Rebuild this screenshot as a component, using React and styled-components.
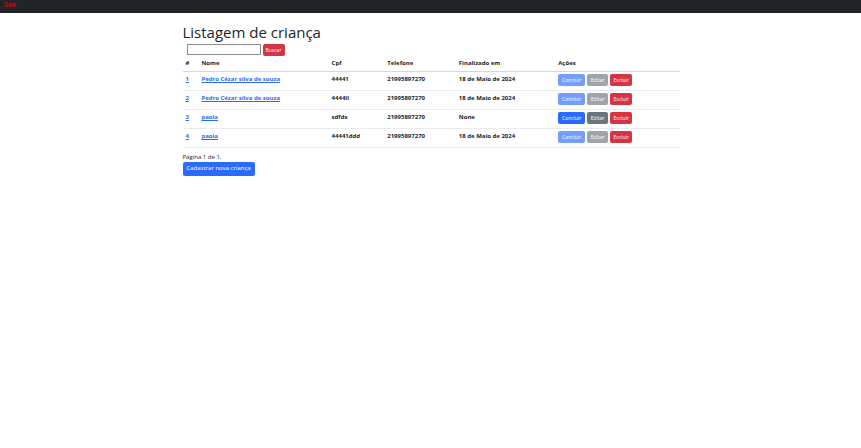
import React from "react";
import styled, { createGlobalStyle } from "styled-components";

const GlobalStyle = createGlobalStyle`
  *, *::before, *::after { box-sizing: border-box; }
  body {
    margin: 0;
    background: #fff;
    color: #212529;
    font-family: "Segoe UI", "Open Sans", "Noto Sans", sans-serif;
    font-size: 6px;
    line-height: 9px;
  }
`;

const TopBar = styled.nav`
  display: flex;
  height: 13px;
  padding: 0 4px;
  background: #212529;
`;

const LogoutLink = styled.a`
  color: #ff0000;
  font-size: 7px;
  line-height: 9px;
  text-decoration: none;
`;

const Container = styled.main`
  max-width: 498px;
  margin: 0 auto;
  padding: 9px 0 0 1px;
`;

const Title = styled.h1`
  margin: 0 0 2px;
  font-size: 15px;
  line-height: 20px;
  font-weight: 500;
`;

const SearchForm = styled.form`
  display: flex;
  align-items: flex-start;
  gap: 2px;
  padding-left: 4px;
`;

const SearchInput = styled.input`
  width: 74px;
  height: 11px;
  padding: 0 2px;
  border: 1px solid #8c8c8c;
  border-radius: 0;
  background: #fff;
  font: inherit;
`;

const tones = {
  primary: "#2a6bfd",
  secondary: "#6c757d",
  danger: "#d63343",
};

const Button = styled.button`
  height: ${(p) => (p.$large ? 14 : 12)}px;
  min-width: 22px;
  padding: 0 ${(p) => (p.$large ? 4 : 3)}px;
  border: 0;
  border-radius: 2px;
  background: ${(p) => tones[p.$tone]};
  color: #fff;
  font-family: inherit;
  font-size: ${(p) => (p.$large ? 6 : 5)}px;
  line-height: 9px;
  white-space: nowrap;
  cursor: pointer;

  &:disabled {
    opacity: 0.65;
    cursor: default;
  }
`;

const Table = styled.table`
  width: 100%;
  margin-bottom: 5px;
  border-collapse: collapse;
  table-layout: fixed;
  font-weight: 700;
`;

const Column = styled.col`
  width: ${(p) => p.$share}%;
`;

const HeadCell = styled.th`
  height: 15px;
  padding: 1px 3px 0;
  border-bottom: 1px solid #d5d8dc;
  text-align: left;
  white-space: nowrap;
`;

const Cell = styled.td`
  height: 19px;
  padding: 0 3px 2px;
  border-bottom: 1px solid #e9ebee;
  vertical-align: middle;
  white-space: nowrap;
`;

const ActionCell = styled(Cell)`
  padding-bottom: 1px;
`;

const RecordLink = styled.a`
  color: #2a6bfd;
  text-decoration: underline;
`;

const Actions = styled.div`
  display: grid;
  grid-template-columns: 27px 21px 22px;
  gap: 2px;

  ${Button} {
    min-width: 0;
    padding: 0;
  }
`;

const PageInfo = styled.p`
  margin: 0;
`;

const columns = [
  { label: "#", share: 3.2 },
  { label: "Nome", share: 26.2 },
  { label: "Cpf", share: 11.2 },
  { label: "Telefone", share: 14.4 },
  { label: "Finalizado em", share: 20 },
  { label: "Ações", share: 25 },
];

const children = [
  { id: 1, name: "Pedro Cézar silva de souza", cpf: "44441", phone: "21995897270", finished: "18 de Maio de 2024" },
  { id: 2, name: "Pedro Cézar silva de souza", cpf: "4444ll", phone: "21995897270", finished: "18 de Maio de 2024" },
  { id: 3, name: "paola", cpf: "sdfds", phone: "21995897270", finished: null },
  { id: 4, name: "paola", cpf: "44441ddd", phone: "21995897270", finished: "18 de Maio de 2024" },
];

function ChildRow({ child }) {
  const done = child.finished !== null;
  return (
    <tr>
      <Cell><RecordLink href={`#${child.id}`}>{child.id}</RecordLink></Cell>
      <Cell><RecordLink href={`#${child.id}`}>{child.name}</RecordLink></Cell>
      <Cell>{child.cpf}</Cell>
      <Cell>{child.phone}</Cell>
      <Cell>{child.finished ?? "None"}</Cell>
      <ActionCell>
        <Actions>
          <Button type="button" $tone="primary" disabled={done}>Concluir</Button>
          <Button type="button" $tone="secondary" disabled={done}>Editar</Button>
          <Button type="button" $tone="danger">Excluir</Button>
        </Actions>
      </ActionCell>
    </tr>
  );
}

export default function App() {
  return (
    <>
      <GlobalStyle />
      <TopBar>
        <LogoutLink href="#sair">Sair</LogoutLink>
      </TopBar>
      <Container>
        <Title>Listagem de criança</Title>
        <SearchForm onSubmit={(e) => e.preventDefault()}>
          <SearchInput type="text" name="busca" aria-label="Buscar criança" />
          <Button type="submit" $tone="danger">Buscar</Button>
        </SearchForm>
        <Table>
          <colgroup>
            {columns.map((c) => <Column key={c.label} $share={c.share} />)}
          </colgroup>
          <thead>
            <tr>
              {columns.map((c) => <HeadCell key={c.label} scope="col">{c.label}</HeadCell>)}
            </tr>
          </thead>
          <tbody>
            {children.map((c) => <ChildRow key={c.id} child={c} />)}
          </tbody>
        </Table>
        <PageInfo>Página 1 de 1.</PageInfo>
        <Button type="button" $tone="primary" $large>Cadastrar nova criança</Button>
      </Container>
    </>
  );
}
